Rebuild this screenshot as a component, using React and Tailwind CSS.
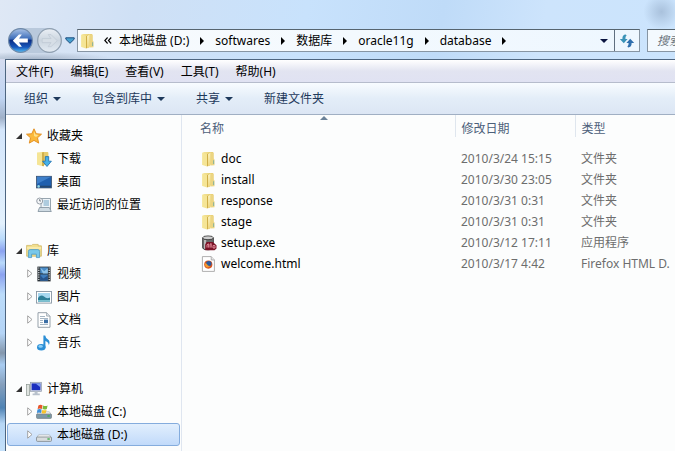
import { useState } from 'react'

const ink = '#000'

function FolderIcon({ className = 'w-4 h-4' }) {
  return (
    <svg viewBox="0 0 16 16" className={className} aria-hidden="true">
      <defs>
        <linearGradient id="folderBack" x1="0" y1="0" x2="1" y2="0">
          <stop offset="0" stopColor="#f6e8a0" />
          <stop offset="1" stopColor="#e3c763" />
        </linearGradient>
        <linearGradient id="folderFront" x1="0" y1="0" x2="0" y2="1">
          <stop offset="0" stopColor="#fbf2bd" />
          <stop offset="1" stopColor="#efd67c" />
        </linearGradient>
      </defs>
      <path d="M1.3 1.8 3 1h8.5q.9 0 .9.9v11.6H6L1.3 14z" fill="url(#folderBack)" />
      <path d="M1.3 1.8 6 3v12.6L1.3 14z" fill="#f5e596" />
      <path d="M6 3.2 9 1.8v12.4l-3 1.4z" fill="#cfae48" />
      <path d="M7 2.9 9.6 1.6v12.6L7 15.3z" fill="url(#folderFront)" />
      <path d="M9.6 1.6h2.2q.8 0 .8.8v5.2l.9 1v5.6l-3.9.2z" fill="#ecd582" />
      <path d="M12.2 9.2h.9v3.8h-.9z" fill="#7fae9c" />
    </svg>
  )
}

function StarIcon() {
  return (
    <svg viewBox="0 0 16 16" className="w-4 h-4" aria-hidden="true">
      <path d="m8 .8 2.2 4.9 5.3.5-4 3.6 1.2 5.3L8 12.4l-4.7 2.7 1.2-5.3-4-3.6 5.3-.5z" fill="#fbb93c" stroke="#e08a1c" strokeWidth=".9" strokeLinejoin="round" />
      <path d="M8 3.2 9.4 6.6l3 .3-2.3 2L8 8z" fill="#fde08a" />
    </svg>
  )
}

function DownloadsIcon() {
  return (
    <svg viewBox="0 0 16 16" className="w-4 h-4" aria-hidden="true">
      <path d="M5 1h6.4q1 0 1 1v12H5z" fill="#e6cc6e" />
      <path d="M1 1.6 6 1v14L1 13.8z" fill="#f5e596" />
      <path d="M6 1.8 8 1v14.2L6 15z" fill="#d0b04c" />
      <path d="M9.3 5.6h3.4v4.6h2.7L11 15.5l-4.4-5.3h2.7z" fill="#45b0e8" stroke="#1c6fb0" strokeWidth=".8" />
    </svg>
  )
}

function DesktopIcon() {
  return (
    <svg viewBox="0 0 16 16" className="w-4 h-4" aria-hidden="true">
      <rect x=".5" y="2.3" width="15" height="11.6" fill="#1f5fae" stroke="#39506d" strokeWidth=".8" />
      <path d="M1 2.8h14L1 10z" fill="#3d7fca" />
      <path d="M1 11.7h14v1.8H1z" fill="#24476f" />
      <circle cx="2.6" cy="12.4" r="1.3" fill="#8fd6e8" />
    </svg>
  )
}

function RecentIcon() {
  return (
    <svg viewBox="0 0 16 16" className="w-4 h-4" aria-hidden="true">
      <path d="M5 1.5h9.5v11H5z" fill="#eef4f8" stroke="#7f8f9c" strokeWidth=".8" />
      <path d="M7.5 4H13M7.5 6H13M7.5 8H13" stroke="#6fa3c4" />
      <path d="M3.5 10.5h9.8l2 4H2z" fill="#cfdbe3" stroke="#7f8f9c" strokeWidth=".8" />
      <circle cx="3.7" cy="4" r="3" fill="#f4f6f8" stroke="#8b959e" strokeWidth=".9" />
      <path d="M3.7 2.2V4H5" stroke="#59646e" strokeWidth=".8" fill="none" />
    </svg>
  )
}

function LibraryIcon() {
  return (
    <svg viewBox="0 0 16 16" className="w-4 h-4" aria-hidden="true">
      <path d="M.6 2.4h5l1-1h5.6v1.4h3.2v10.4H.6z" fill="#f2df8e" stroke="#cdb25a" strokeWidth=".7" />
      <path d="M1 5h14" stroke="#fff6c8" />
      <path d="M2.4 14.6V8.4q0-1.8 1.8-1.8h7.6q1.8 0 1.8 1.8v6.2h-3.2v-3.4H5.6v3.4z" fill="#79c8ea" stroke="#4a98c4" strokeWidth=".8" />
    </svg>
  )
}

function VideoIcon() {
  return (
    <svg viewBox="0 0 16 16" className="w-4 h-4" aria-hidden="true">
      <rect x="1.4" y=".6" width="13.2" height="14.8" fill="#2b3238" />
      <path d="M4.2 1.4h7.6v6H4.2z" fill="#4a8cc8" />
      <path d="M4.2 8.4h7.6v6.2H4.2z" fill="#3f7dbd" />
      <path d="m4.2 1.4 4 3.8 3.6-3v5.2H7z" fill="#8ec3ea" />
      <path d="m4.2 9 3 3.4 4.6-3v5.2H4.2z" fill="#27548c" />
      <path d="M2.8 1.4v13.6M13.2 1.4v13.6" stroke="#e8edf0" strokeWidth="1.1" strokeDasharray="1.2 1.1" />
    </svg>
  )
}

function PictureIcon() {
  return (
    <svg viewBox="0 0 16 16" className="w-4 h-4" aria-hidden="true">
      <rect x=".5" y="2.5" width="15" height="11.6" fill="#fff" stroke="#8796a3" strokeWidth=".9" />
      <path d="M2 4h12v8.6H2z" fill="#a6d7ef" />
      <path d="M2 9q3-4 6-1.4T14 8.4v4.2H2z" fill="#2d7f98" />
      <path d="M2 11h12v1.6H2z" fill="#7cc2d0" />
    </svg>
  )
}

function DocumentIcon() {
  return (
    <svg viewBox="0 0 16 16" className="w-4 h-4" aria-hidden="true">
      <path d="M2 .7h8.6l3.4 3.4v11.2H2z" fill="#fff" stroke="#8b96a0" strokeWidth=".9" />
      <path d="M10.6.7v3.4H14" fill="#dfe6ec" stroke="#8b96a0" strokeWidth=".7" />
      <path d="M4 4.5h5M4 6.5h8M4 8.5h3M4 10.5h3M4 12.5h8" stroke="#8fa3b4" strokeWidth=".8" />
      <path d="M8 7.6h4v3.6H8z" fill="#3a6ea5" />
    </svg>
  )
}

function MusicIcon() {
  return (
    <svg viewBox="0 0 16 16" className="w-4 h-4" aria-hidden="true">
      <path d="M7.4.6h1.8q.4 2.6 2.8 4 2.6 2 .8 5.6.1-2.8-3.4-4.2v6.6h-2z" fill="#2b8fd6" />
      <ellipse cx="5.3" cy="12.2" rx="4.3" ry="3.2" fill="#2b8fd6" />
      <ellipse cx="4.6" cy="11.4" rx="2.2" ry="1.3" fill="#8fd0f5" />
    </svg>
  )
}

function ComputerIcon() {
  return (
    <svg viewBox="0 0 16 16" className="w-4 h-4" aria-hidden="true">
      <rect x=".6" y="3.6" width="2.8" height="11" fill="#dfe4e0" stroke="#8a9490" strokeWidth=".7" />
      <rect x="4.5" y="1.3" width="11" height="9" fill="#d5dbe4" stroke="#8c97a8" strokeWidth=".7" />
      <path d="M5.6 2.4h8.8v6.8H5.6z" fill="#1b2fbf" />
      <path d="M9.6 2.4h4.8v3.8z" fill="#7f9bf0" />
      <path d="M8.6 10.4h3v2.2h2.2v1.6H6.6v-1.6h2z" fill="#b8c1cc" />
    </svg>
  )
}

function DriveIcon({ system }) {
  return (
    <svg viewBox="0 0 16 16" className="w-4 h-4" aria-hidden="true">
      <path d="M2.6 7.8h10.8l2 3H.6z" fill="#f3f5f6" stroke="#9aa3a8" strokeWidth=".6" />
      <rect x=".5" y="10" width="15" height="4.4" rx="1" fill={system ? '#7b98a6' : '#d8dcde'} stroke="#7d878c" strokeWidth=".8" />
      <path d="M11.4 12h2.4" stroke="#3fae4e" strokeWidth="1.4" />
      {system && (
        <g>
          <path d="M2.4 1.6q2-1.4 4.2-.2L5.8 5q-2-1-4.2 0z" fill="#e8562a" />
          <path d="M7.2 1.6q2 1 4.4 0L10.8 5q-2.2 1-4.3.1z" fill="#7cba3c" />
          <path d="M1.5 5.6q2-1 4.2 0L5 9Q3 8 .8 9z" fill="#3d8fd8" />
          <path d="M6.3 5.7q2.2 1 4.3 0L9.8 9q-2 1-4.2 0z" fill="#f6c32c" />
        </g>
      )}
    </svg>
  )
}

function SetupIcon() {
  return (
    <svg viewBox="0 0 16 16" className="w-4 h-4" aria-hidden="true">
      <path d="M1.6 3v9.8q0 2 5.4 2t5.4-2V3z" fill="#6b6b6b" stroke="#303030" strokeWidth=".8" />
      <path d="M3 4.6v9.2h2.2V5z" fill="#b8b8b8" />
      <ellipse cx="7" cy="2.8" rx="5.4" ry="1.9" fill="#cfcfcf" stroke="#303030" strokeWidth=".8" />
      <path d="M5.6 7h6.2l3.7 3.2v3.4l-2 1.6H4.2V9.4z" fill="#7a1226" />
      <path d="M6 12.6V9.8l1.4-1v3.8M9 12.6V9.2l1.2-.6v4M12 13v-2.4h2V13z" stroke="#f7a6b2" strokeWidth=".8" fill="none" />
    </svg>
  )
}

function HtmlIcon() {
  return (
    <svg viewBox="0 0 16 16" className="w-4 h-4" aria-hidden="true">
      <path d="M1.4.6h8.8L13.4 4v11.4h-12z" fill="#fff" stroke="#9a9a9a" strokeWidth=".8" />
      <path d="M10.2.6V4h3.2" fill="#e6e6e6" stroke="#9a9a9a" strokeWidth=".7" />
      <circle cx="7.3" cy="8.6" r="4.1" fill="#d9541e" />
      <circle cx="7.8" cy="7.6" r="2.7" fill="#2c5a9c" />
      <path d="M3.6 7.2q2-.2 2.6 1.4t3 1.2q-1 2-3 1.8T3.6 7.2z" fill="#f39a2e" />
    </svg>
  )
}

function RefreshIcon() {
  return (
    <svg viewBox="0 0 16 16" className="w-4 h-4" aria-hidden="true">
      <path d="M6.8 1.6Q3.2 1.8 3.4 6H.8l4 4.2L8.6 6H6.4Q6.2 3.6 7.6 2.6z" fill="#3a93b8" />
      <path d="M9.2 14.4q3.6-.2 3.4-4.4h2.6l-4-4.2L7.4 10h2.2q.2 2.4-1.2 3.4z" fill="#2f6fae" />
    </svg>
  )
}

function Caret({ className }) {
  return (
    <svg viewBox="0 0 8 4" className={className} aria-hidden="true">
      <path d="M0 0h8L4 4z" fill="currentColor" />
    </svg>
  )
}

const crumbs = ['本地磁盘 (D:)', 'softwares', '数据库', 'oracle11g', 'database']
const menus = ['文件(F)', '编辑(E)', '查看(V)', '工具(T)', '帮助(H)']
const tools = [
  { label: '组织', menu: true },
  { label: '包含到库中', menu: true },
  { label: '共享', menu: true },
  { label: '新建文件夹' },
]

const groups = [
  {
    label: '收藏夹',
    icon: <StarIcon />,
    items: [
      { label: '下载', icon: <DownloadsIcon /> },
      { label: '桌面', icon: <DesktopIcon /> },
      { label: '最近访问的位置', icon: <RecentIcon /> },
    ],
  },
  {
    label: '库',
    icon: <LibraryIcon />,
    items: [
      { label: '视频', icon: <VideoIcon />, expandable: true },
      { label: '图片', icon: <PictureIcon />, expandable: true },
      { label: '文档', icon: <DocumentIcon />, expandable: true },
      { label: '音乐', icon: <MusicIcon />, expandable: true },
    ],
  },
  {
    label: '计算机',
    icon: <ComputerIcon />,
    items: [
      { label: '本地磁盘 (C:)', icon: <DriveIcon system />, expandable: true },
      { label: '本地磁盘 (D:)', icon: <DriveIcon />, expandable: true },
    ],
  },
]

const files = [
  { name: 'doc', date: '2010/3/24 15:15', type: '文件夹', icon: <FolderIcon /> },
  { name: 'install', date: '2010/3/30 23:05', type: '文件夹', icon: <FolderIcon /> },
  { name: 'response', date: '2010/3/31 0:31', type: '文件夹', icon: <FolderIcon /> },
  { name: 'stage', date: '2010/3/31 0:31', type: '文件夹', icon: <FolderIcon /> },
  { name: 'setup.exe', date: '2010/3/12 17:11', type: '应用程序', icon: <SetupIcon /> },
  { name: 'welcome.html', date: '2010/3/17 4:42', type: 'Firefox HTML D.', icon: <HtmlIcon /> },
]

function NavButtons() {
  return (
    <div className="flex items-center shrink-0">
      <div className="flex items-center gap-1 rounded-full bg-[#b9c9dc]">
        <button type="button" aria-label="后退" className="w-[25px] h-[25px]">
          <svg viewBox="0 0 26 26" className="w-full h-full" aria-hidden="true">
            <defs>
              <linearGradient id="back" x1="0" y1="0" x2="0" y2="1">
                <stop offset="0" stopColor="#a9c2e6" />
                <stop offset=".42" stopColor="#3f6fba" />
                <stop offset=".5" stopColor="#0c2f86" />
                <stop offset=".78" stopColor="#1858bc" />
                <stop offset="1" stopColor="#58c0f4" />
              </linearGradient>
            </defs>
            <circle cx="13" cy="13" r="12.3" fill="url(#back)" stroke="#6d88a8" strokeWidth="1.2" />
            <path d="M5 13.2 11.4 6.8h3L11.4 11h9.2v4.2h-9.2l3 4.2h-3z" fill="#fff" />
          </svg>
        </button>
        <button type="button" aria-label="前进" className="w-[25px] h-[25px]">
          <svg viewBox="0 0 26 26" className="w-full h-full" aria-hidden="true">
            <defs>
              <linearGradient id="fwd" x1="0" y1="0" x2="0" y2="1">
                <stop offset="0" stopColor="#eaeff5" />
                <stop offset=".5" stopColor="#cbd5df" />
                <stop offset="1" stopColor="#e3ebf3" />
              </linearGradient>
            </defs>
            <circle cx="13" cy="13" r="12.3" fill="url(#fwd)" stroke="#8f9fb0" strokeWidth="1.2" />
            <path d="M21 13.2 14.6 6.8h-3l3 4.2H5.4v4.2h9.2l-3 4.2h3z" fill="#d6dee6" stroke="#b9c4cf" strokeWidth=".6" />
          </svg>
        </button>
      </div>
      <button type="button" aria-label="最近浏览的位置" className="w-[15px] h-5 flex items-center justify-center">
        <svg viewBox="0 0 10 7" className="w-[10px] h-[7px]" aria-hidden="true">
          <path d="M.8.8h8.4v1.4L5 6.3.8 2.2z" fill="#46a0cf" stroke="#1f4f80" strokeWidth="1" />
        </svg>
      </button>
    </div>
  )
}

function AddressBar() {
  return (
    <div className="flex-1 min-w-0 h-[23px] flex border border-[#8795a3] border-t-[#56646f] bg-linear-to-r from-[#f8fbfd] to-[#eef7ff]">
      <div className="flex-1 min-w-0 flex items-center pl-[2px]">
        <FolderIcon className="w-4 h-4 shrink-0" />
        <button type="button" aria-label="上级位置" className="w-[23px] h-full shrink-0 flex items-center justify-center">
          <svg viewBox="0 0 8 7" className="w-2 h-[7px]" aria-hidden="true">
            <path d="M3.6.5.8 3.5l2.8 3M7.2.5l-2.8 3 2.8 3" fill="none" stroke={ink} strokeWidth="1.1" />
          </svg>
        </button>
        {crumbs.map((crumb) => (
          <div key={crumb} className="flex items-center shrink-0">
            <a href="#" className="whitespace-nowrap">{crumb}</a>
            <span className="w-[26px] flex justify-center">
              <svg viewBox="0 0 4 8" className="w-1 h-2" aria-hidden="true">
                <path d="M0 0v8l4-4z" fill={ink} />
              </svg>
            </span>
          </div>
        ))}
      </div>
      <button type="button" aria-label="以前的位置" className="w-5 flex items-center justify-center shrink-0">
        <Caret className="w-2 h-1 text-[#0a1440]" />
      </button>
      <button type="button" aria-label="刷新" className="w-[25px] flex items-center justify-center shrink-0 border-l border-[#5f6f80]">
        <RefreshIcon />
      </button>
    </div>
  )
}

function TreeGroup({ group, selected, onSelect }) {
  const [open, setOpen] = useState(true)

  return (
    <li>
      <button type="button" aria-expanded={open} onClick={() => setOpen(!open)} className="w-full h-[23px] flex items-center pl-[9px]">
        <svg viewBox="0 0 6 6" className="w-[6px] h-[6px] mr-1" aria-hidden="true">
          <path d="M6 0v6H0z" fill="#333" />
        </svg>
        {group.icon}
        <span className="ml-[5px]">{group.label}</span>
      </button>
      {open && (
        <ul>
          {group.items.map((item) => (
            <li key={item.label}>
              <a
                href="#"
                onClick={() => onSelect(item.label)}
                className={`h-[23px] flex items-center pl-[18px] border rounded-[3px] ${
                  selected === item.label ? 'border-[#84acdd] bg-linear-to-b from-[#e2effd] to-[#c1dafa]' : 'border-transparent'
                }`}
              >
                <span className="w-[10px] pl-px shrink-0">
                  {item.expandable && (
                    <svg viewBox="0 0 6 9" className="w-[6px] h-[9px]" aria-hidden="true">
                      <path d="M.7.8v7.4l4.3-3.7z" fill="#fff" stroke="#9a9a9a" strokeWidth=".9" />
                    </svg>
                  )}
                </span>
                <span className="shrink-0">{item.icon}</span>
                <span className="ml-[5px] whitespace-nowrap">{item.label}</span>
              </a>
            </li>
          ))}
        </ul>
      )}
    </li>
  )
}

function FileTable() {
  return (
    <table className="w-full table-fixed border-collapse text-left">
      <colgroup>
        <col className="w-[273px]" />
        <col className="w-[120px]" />
        <col />
      </colgroup>
      <thead>
        <tr className="h-[22px] text-[#4c607a]">
          <th className="relative p-0 pt-[5px] pl-[18px] font-normal border-r border-[#dfe6ee]">
            名称
            <svg viewBox="0 0 8 4" className="absolute left-[138px] top-[1px] w-2 h-1" aria-hidden="true">
              <path d="M0 4h8L4 0z" fill="#6b8299" />
            </svg>
          </th>
          <th className="p-0 pt-[5px] pl-[6px] font-normal border-r border-[#dfe6ee]">修改日期</th>
          <th className="p-0 pt-[5px] pl-[6px] font-normal">类型</th>
        </tr>
      </thead>
      <tbody className="before:block before:h-[11px] before:content-['']">
        {files.map((file) => (
          <tr key={file.name} className="h-[21px] text-[#6d6d6d]">
            <td className="p-0 pl-[19px]">
              <div className="flex items-center gap-1 text-black">
                {file.icon}
                <a href="#">{file.name}</a>
              </div>
            </td>
            <td className="p-0 pl-[6px] whitespace-nowrap">{file.date}</td>
            <td className="p-0 pl-[6px] whitespace-nowrap overflow-hidden">{file.type}</td>
          </tr>
        ))}
      </tbody>
    </table>
  )
}

export default function App() {
  const [selected, setSelected] = useState('本地磁盘 (D:)')

  return (
    <div className="min-h-screen flex flex-col overflow-hidden bg-[#c9e2fb] text-[12px] leading-4 text-black font-['Noto_Sans','Noto_Sans_CJK_SC',sans-serif]">
      <header className="flex items-center pt-[28px] pb-[6px] pl-2 bg-[radial-gradient(circle_at_98%_20%,#a9c1dc_0,#a9c1dc00_18px),radial-gradient(ellipse_at_5%_100%,#a7b6ca_0,#a7b6ca00_80px),linear-gradient(100deg,#dfe8f5_0,#cfe0f5_20%,#c8e2fc_45%,#bfdbf8_65%,#cde4fc_80%,#cbe4fd_100%)]">
        <NavButtons />
        <AddressBar />
        <input
          type="text"
          aria-label="搜索"
          placeholder="搜索 database"
          className="ml-[7px] w-7 h-[23px] shrink-0 border border-r-0 border-[#8795a3] border-t-[#56646f] bg-[#f3f9fe] pl-[9px] italic placeholder:text-[#6c7680]"
        />
      </header>

      <div className="flex-1 flex">
        <div className="w-[5px] shrink-0 bg-linear-to-b from-[#b9d0ee] via-[#d8eafc] via-20% to-[#8fb4dc]">
          <div className="h-full bg-[linear-gradient(to_bottom,#d5dcf0_0,#c0d5f2_10%,#9fb0c8_15%,#d4e6fb_18%,#e3f1fd_42%,#b9dafb_46%,#8ba2f0_49%,#b9dafb_52%,#8ba2f0_55%,#bcdcfa_60%,#b4d4f6_70%,#8497ac_75%,#a9cdf2_78%,#86a0bd_83%,#4f83b4_89%,#b6d6f5_93%,#c4e0fa_100%)]" />
        </div>
        <div className="flex-1 min-w-0 flex flex-col border-l border-t border-[#4d6580] bg-[#fcfdfd]">
          <nav aria-label="菜单栏" className="h-[23px] flex items-center gap-[17px] pt-px pl-[10px] border-b border-[#b6bccc] bg-linear-to-b from-white via-[#e2e4f1] to-[#e0e2f2]">
            {menus.map((menu) => (
              <button key={menu} type="button">{menu}</button>
            ))}
          </nav>

          <div role="toolbar" aria-label="工具栏" className="h-8 flex items-center gap-[31px] pl-[18px] border-b border-[#a0afc3] bg-linear-to-b from-[#f8fcff] via-[#e3edf8] to-[#dce6f4] text-[#1e395b]">
            {tools.map((tool) => (
              <button key={tool.label} type="button" className="flex items-center gap-[5px]">
                {tool.label}
                {tool.menu && <Caret className="w-2 h-1" />}
              </button>
            ))}
          </div>

          <div className="flex-1 flex">
            <aside className="w-44 shrink-0 border-r border-[#dfe6f0] pt-[9px] px-px">
              <ul className="flex flex-col gap-[23px]">
                {groups.map((group) => (
                  <TreeGroup key={group.label} group={group} selected={selected} onSelect={setSelected} />
                ))}
              </ul>
            </aside>
            <main className="flex-1 min-w-0">
              <FileTable />
            </main>
          </div>
        </div>
      </div>
    </div>
  )
}
